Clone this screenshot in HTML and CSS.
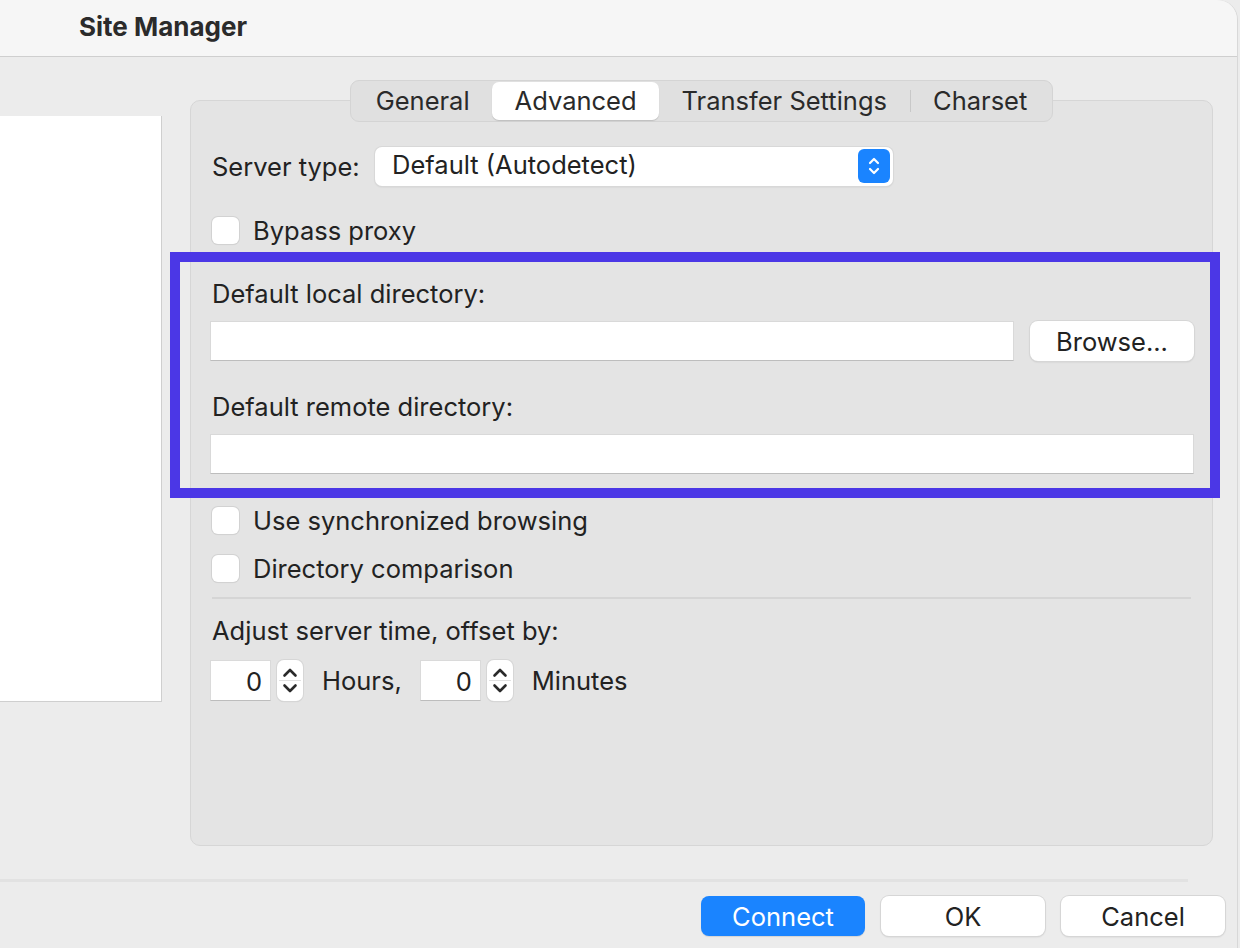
FILE: index.html
```html
<!DOCTYPE html>
<html>
<head>
<meta charset="utf-8">
<link rel="stylesheet" href="styles.css">
</head>
<body>
<div class="window">
  <div class="titlebar">Site Manager</div>
  <div class="main">
    <div class="site-list"></div>
    <div class="tabs-area">
      <div class="segmented">
        <div class="seg">General</div>
        <div class="seg active">Advanced</div>
        <div class="seg">Transfer Settings</div>
        <div class="seg-sep"></div>
        <div class="seg">Charset</div>
      </div>
      <div class="panel">
        <div class="row server-row">
          <span class="label">Server type:</span>
          <div class="select">
            <span class="select-text">Default (Autodetect)</span>
            <span class="select-arrows">
              <svg width="16" height="24" viewBox="0 0 16 24"><path d="M4 9 L8 5 L12 9 M4 15 L8 19 L12 15" fill="none" stroke="#fff" stroke-width="2.2" stroke-linecap="round" stroke-linejoin="round"/></svg>
            </span>
          </div>
        </div>
        <label class="check bypass"><span class="box"></span>Bypass proxy</label>
        <div class="label local-label">Default local directory:</div>
        <div class="row local-row">
          <div class="input grow"></div>
          <div class="button browse">Browse...</div>
        </div>
        <div class="label remote-label">Default remote directory:</div>
        <div class="input remote-input"></div>
        <label class="check sync"><span class="box"></span>Use synchronized browsing</label>
        <label class="check compare"><span class="box"></span>Directory comparison</label>
        <div class="separator"></div>
        <div class="label adjust-label">Adjust server time, offset by:</div>
        <div class="row spin-row">
          <div class="num">0</div>
          <div class="stepper">
            <svg width="26" height="41" viewBox="0 0 26 41"><path d="M7.5 15.5 L13 10 L18.5 15.5" fill="none" stroke="#2a2a2a" stroke-width="2.6" stroke-linecap="round" stroke-linejoin="round"/><line x1="2" y1="20.5" x2="24" y2="20.5" stroke="#e0e0e0" stroke-width="1"/><path d="M7.5 25.5 L13 31 L18.5 25.5" fill="none" stroke="#2a2a2a" stroke-width="2.6" stroke-linecap="round" stroke-linejoin="round"/></svg>
          </div>
          <span class="unit">Hours,</span>
          <div class="num">0</div>
          <div class="stepper">
            <svg width="26" height="41" viewBox="0 0 26 41"><path d="M7.5 15.5 L13 10 L18.5 15.5" fill="none" stroke="#2a2a2a" stroke-width="2.6" stroke-linecap="round" stroke-linejoin="round"/><line x1="2" y1="20.5" x2="24" y2="20.5" stroke="#e0e0e0" stroke-width="1"/><path d="M7.5 25.5 L13 31 L18.5 25.5" fill="none" stroke="#2a2a2a" stroke-width="2.6" stroke-linecap="round" stroke-linejoin="round"/></svg>
          </div>
          <span class="unit">Minutes</span>
        </div>
      </div>
    </div>
  </div>
  <div class="footer-line"></div>
  <div class="footer">
    <div class="button primary">Connect</div>
    <div class="button">OK</div>
    <div class="button">Cancel</div>
  </div>
  <div class="highlight"></div>
</div>
</body>
</html>
```

FILE: styles.css
```css
* { box-sizing: border-box; }
html, body { margin: 0; padding: 0; }
body {
  width: 1240px;
  height: 948px;
  overflow: hidden;
  background: #ececec;
  font-family: Inter, "Noto Sans", sans-serif;
  color: #222;
  font-size: 25.5px;
}
.window {
  position: relative;
  width: 1238px;
  height: 948px;
  background: #ececec;
  border-top-right-radius: 20px;
  border-right: 1px solid #d8d8d8;
}
.titlebar {
  height: 57px;
  background: #f6f6f6;
  border-bottom: 1px solid #cfcfcf;
  border-top-right-radius: 20px;
  padding-left: 79px;
  font-weight: 700;
  font-size: 26px;
  line-height: 54px;
  color: #2b2b2b;
}
.main {
  display: flex;
  align-items: flex-start;
}
.site-list {
  width: 162px;
  height: 586px;
  margin-top: 59px;
  background: #fff;
  border-right: 1px solid #cfcfcf;
  border-bottom: 1px solid #cfcfcf;
}
.tabs-area {
  margin-left: 28px;
  width: 1023px;
  display: flex;
  flex-direction: column;
  align-items: center;
}
.segmented {
  position: relative;
  z-index: 2;
  margin-top: 23px;
  height: 42px;
  display: flex;
  align-items: center;
  padding: 0 2px;
  background: #e0e0e0;
  border: 1px solid #d4d4d4;
  border-radius: 9px;
}
.seg {
  height: 38px;
  line-height: 38px;
  padding: 0 22.5px;
  border-radius: 7px;
  color: #2a2a2a;
}
.seg.active {
  background: #fff;
  box-shadow: 0 1px 1px rgba(0,0,0,0.15);
}
.seg-sep {
  width: 1px;
  height: 22px;
  background: #c8c8c8;
}
.panel {
  width: 1023px;
  height: 746px;
  margin-top: -22px;
  background: #e4e4e4;
  border: 1px solid #d6d6d6;
  border-radius: 10px;
  padding: 45px 18px 0 19px;
  display: flex;
  flex-direction: column;
}
.row { display: flex; align-items: center; }
.label { padding-left: 2px; }
.server-row { height: 40px; }
.server-row .label { width: 165px; }
.select {
  width: 518px;
  height: 39px;
  background: #fff;
  border-radius: 7px;
  box-shadow: 0 0 0 1px #d8d8d8, 0 1px 2px rgba(0,0,0,0.12);
  display: flex;
  align-items: center;
  justify-content: space-between;
  padding: 0 3px 0 17px;
}
.select-text { position: relative; top: -2px; }
.select-arrows {
  width: 32px;
  height: 34px;
  background: #1a84ff;
  border-radius: 6px;
  display: flex;
  align-items: center;
  justify-content: center;
}
.check {
  display: flex;
  align-items: center;
  height: 28px;
}
.box {
  width: 27px;
  height: 27px;
  margin-left: 2px;
  margin-right: 14px;
  background: #fff;
  border-radius: 6px;
  box-shadow: 0 0 0 1px #d2d2d2, 0 1px 1px rgba(0,0,0,0.08);
}
.bypass { margin-top: 30px; }
.local-label { margin-top: 36px; line-height: 28px; }
.local-row { margin-top: 13px; height: 40px; }
.input {
  height: 40px;
  background: #fff;
  border: 1px solid #d9d9d9;
  border-bottom-color: #bdbdbd;
}
.grow { flex: 1; }
.button {
  width: 164px;
  height: 40px;
  background: #fff;
  border-radius: 8px;
  box-shadow: 0 0 0 1px #d6d6d6, 0 1px 2px rgba(0,0,0,0.15);
  display: flex;
  align-items: center;
  justify-content: center;
  color: #222;
}
.browse { margin-left: 16px; }
.remote-label { margin-top: 32px; line-height: 28px; }
.remote-input { margin-top: 13px; }
.sync { margin-top: 32px; }
.compare { margin-top: 20px; }
.separator {
  margin-top: 15px;
  margin-left: 2px;
  margin-right: 3px;
  height: 2px;
  background: #d5d5d5;
}
.adjust-label { margin-top: 18px; line-height: 28px; }
.spin-row { margin-top: 15px; height: 41px; }
.num {
  width: 61px;
  height: 41px;
  background: #fff;
  border: 1px solid #dadada;
  border-bottom-color: #bdbdbd;
  text-align: right;
  padding-right: 8px;
  line-height: 41px;
}
.stepper {
  width: 26px;
  height: 41px;
  margin-left: 6px;
  background: #fff;
  border-radius: 7px;
  box-shadow: 0 0 0 1px #d6d6d6, 0 1px 1px rgba(0,0,0,0.12);
  display: flex;
}
.unit { margin-left: 19px; margin-right: 18px; }
.footer-line {
  margin-top: 33px;
  width: 1188px;
  height: 3px;
  background: #e2e2e2;
}
.footer {
  display: flex;
  justify-content: flex-end;
  gap: 16px;
  padding-right: 12px;
  margin-top: 14px;
}
.footer .button { font-size: 25.5px; }
.button.primary {
  background: #1a84ff;
  color: #fff;
  box-shadow: 0 1px 1px rgba(0,0,0,0.1);
}
.highlight {
  position: absolute;
  left: 170px;
  top: 252px;
  width: 1050px;
  height: 246px;
  border: 10px solid #4b37e6;
  pointer-events: none;
}
```
